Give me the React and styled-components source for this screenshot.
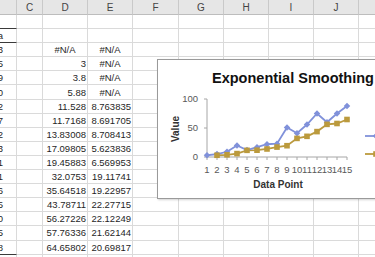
import styled, { createGlobalStyle } from "styled-components";

const GlobalStyle = createGlobalStyle`
  html, body {
    margin: 0;
    padding: 0;
    background: #ffffff;
    overflow: hidden;
  }
  body {
    font-family: "Liberation Sans", Arial, sans-serif;
  }
`;

const COLS = [
  { key: "B", label: "", width: 17 },
  { key: "C", label: "C", width: 26 },
  { key: "D", label: "D", width: 45 },
  { key: "E", label: "E", width: 45 },
  { key: "F", label: "F", width: 46 },
  { key: "G", label: "G", width: 45 },
  { key: "H", label: "H", width: 45 },
  { key: "I", label: "I", width: 45 },
  { key: "J", label: "J", width: 45 },
  { key: "K", label: "", width: 45 },
];

const DATA = [3, 5, 9, 20, 12, 17, 22, 23, 51, 41, 56, 75, 60, 75, 88];
const FORECAST = [
  null, 3, 3.8, 5.88, 11.528, 11.7168, 13.83008, 17.09805, 19.45883,
  32.0753, 35.64518, 43.78711, 56.27226, 57.76336, 64.65802,
];
const ERRORS = [
  "#N/A", "#N/A", "#N/A", "#N/A", "8.763835", "8.691705", "8.708413",
  "5.623836", "6.569953", "19.11741", "19.22957", "22.27715", "22.12249",
  "21.62144", "20.69817",
];

// rows under the header: blank, the table head, 15 values, one more blank
const ROWS = [
  { B: "" },
  { B: "Data", heavyTop: true, heavyBottom: true },
  ...DATA.map((v, i) => ({
    B: String(v),
    D: FORECAST[i] === null ? "#N/A" : String(FORECAST[i]),
    E: ERRORS[i],
    heavyBottom: i === DATA.length - 1,
  })),
  { B: "" },
];

const Page = styled.div`
  position: relative;
  width: 375px;
  height: 257px;
  overflow: hidden;
`;

const Grid = styled.div`
  display: grid;
  grid-template-columns: ${COLS.map((c) => `${c.width}px`).join(" ")};
  grid-template-rows: 15px repeat(${ROWS.length}, 14.1px);
`;

const HeadCell = styled.div`
  box-sizing: border-box;
  background: #e6e6e6;
  border-right: 1px solid #c9c9c9;
  border-bottom: 1px solid #bdbdbd;
  color: #444444;
  font-size: 10px;
  display: flex;
  align-items: center;
  justify-content: center;
`;

const Cell = styled.div`
  box-sizing: border-box;
  overflow: hidden;
  white-space: nowrap;
  border-right: 1px solid #dadada;
  border-bottom: 1px solid ${(p) => (p.$heavy ? "#3a3a3a" : "#dadada")};
  color: #1f1f1f;
  font-size: 9.5px;
  display: flex;
  align-items: center;
  justify-content: ${(p) => (p.$center ? "center" : "flex-end")};
  padding-right: ${(p) => (p.$clipped ? "13px" : p.$center ? "0" : "1px")};
`;

const ChartBox = styled.div`
  position: absolute;
  left: 157px;
  top: 59px;
  width: 240px;
  height: 140px;
  box-sizing: border-box;
  background: #ffffff;
  border: 1px solid #9a9a9a;
  box-shadow: 1px 1px 2px rgba(0, 0, 0, 0.18);
`;

const ChartSvg = styled.svg`
  display: block;
  font-family: "Liberation Sans", Arial, sans-serif;
`;

const BLUE = "#8091da";
const GOLD = "#bb9a3d";
const X0 = 49;
const STEP = 10;
const Y0 = 97;
const SCALE = 0.58;

const px = (i) => X0 + i * STEP;
const py = (v) => Y0 - v * SCALE;

const Chart = () => {
  const bluePts = DATA.map((v, i) => `${px(i)},${py(v)}`).join(" ");
  const goldPts = FORECAST.map((v, i) => (v === null ? null : `${px(i)},${py(v)}`))
    .filter(Boolean)
    .join(" ");

  return (
    <ChartBox>
      <ChartSvg width="240" height="140" viewBox="0 0 240 140">
        <text x="135" y="22.5" textAnchor="middle" fontSize="14.5" fontWeight="700" fill="#111">
          Exponential Smoothing
        </text>

        {/* y axis */}
        <line x1={X0} y1={py(100)} x2={X0} y2={Y0} stroke="#a6a6a6" strokeWidth="1" />
        {[0, 50, 100].map((v) => (
          <g key={v}>
            <line x1={X0 - 3} y1={py(v)} x2={X0} y2={py(v)} stroke="#a6a6a6" strokeWidth="1" />
            <text x={X0 - 9} y={py(v) + 3.3} textAnchor="end" fontSize="9.5" fill="#595959">
              {v}
            </text>
          </g>
        ))}
        <text
          transform={`translate(21 69) rotate(-90)`}
          textAnchor="middle"
          fontSize="10"
          fontWeight="700"
          fill="#333"
        >
          Value
        </text>

        {/* x axis */}
        <line x1={X0} y1={Y0} x2={px(14)} y2={Y0} stroke="#a6a6a6" strokeWidth="1" />
        {DATA.map((_, i) => (
          <g key={i}>
            <line x1={px(i)} y1={Y0} x2={px(i)} y2={Y0 + 3} stroke="#a6a6a6" strokeWidth="1" />
            <text x={px(i)} y={Y0 + 16} textAnchor="middle" fontSize="9.5" fill="#595959">
              {i + 1}
            </text>
          </g>
        ))}
        <text x="120" y="127.5" textAnchor="middle" fontSize="10" fontWeight="700" fill="#333">
          Data Point
        </text>

        {/* series */}
        <polyline points={goldPts} fill="none" stroke={GOLD} strokeWidth="1.8" />
        <polyline points={bluePts} fill="none" stroke={BLUE} strokeWidth="1.8" />
        {DATA.map((v, i) => (
          <rect
            key={`b${i}`}
            x={px(i) - 2.3}
            y={py(v) - 2.3}
            width="4.6"
            height="4.6"
            fill={BLUE}
            transform={`rotate(45 ${px(i)} ${py(v)})`}
          />
        ))}
        {FORECAST.map((v, i) =>
          v === null ? null : (
            <rect key={`g${i}`} x={px(i) - 2.8} y={py(v) - 2.8} width="5.6" height="5.6" fill={GOLD} />
          )
        )}

        {/* legend, cut off by the window */}
        <line x1="207" y1="76" x2="228" y2="76" stroke={BLUE} strokeWidth="1.8" />
        <rect x="215.7" y="73.7" width="4.6" height="4.6" fill={BLUE} transform="rotate(45 218 76)" />
        <line x1="207" y1="94" x2="228" y2="94" stroke={GOLD} strokeWidth="1.8" />
        <rect x="215.2" y="91.2" width="5.6" height="5.6" fill={GOLD} />
      </ChartSvg>
    </ChartBox>
  );
};

export default function App() {
  return (
    <Page>
      <GlobalStyle />
      <Grid>
        {COLS.map((c) => (
          <HeadCell key={c.key}>{c.label}</HeadCell>
        ))}
        {ROWS.map((row, r) =>
          COLS.map((c) => {
            const value = row[c.key] || "";
            const isB = c.key === "B";
            const heavy = isB && (row.heavyBottom || (ROWS[r + 1] && ROWS[r + 1].heavyTop));
            return (
              <Cell
                key={`${r}-${c.key}`}
                $heavy={heavy}
                $clipped={isB}
                $center={value === "#N/A"}
              >
                {value}
              </Cell>
            );
          })
        )}
      </Grid>
      <Chart />
    </Page>
  );
}
